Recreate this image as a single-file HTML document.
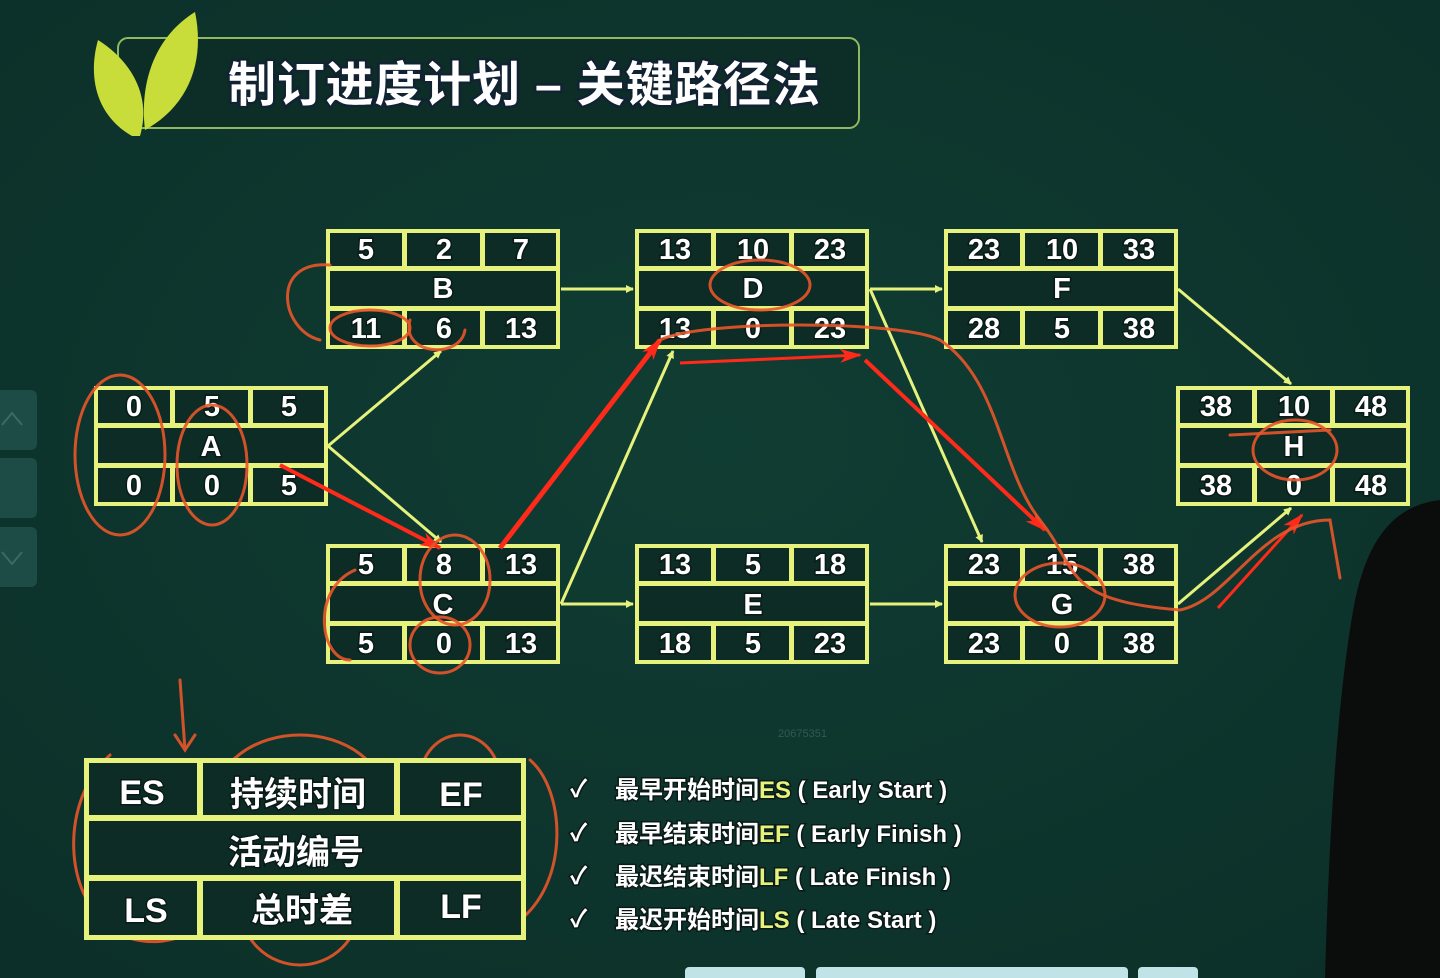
<!DOCTYPE html>
<html><head><meta charset="utf-8"><style>
html,body{margin:0;padding:0;background:#0f3a31;}
svg{display:block}
text{font-family:"Liberation Sans","Noto Sans CJK SC",sans-serif;font-weight:bold;fill:#fff;paint-order:stroke;stroke:#0a1a16;stroke-width:3px;}
.n{font-size:29px;text-anchor:middle;}
.y{stroke:#e6f27c;stroke-width:3;fill:none}
.r{stroke:#ff2a1a;fill:none}
.o{stroke:#e8552a;stroke-width:3;fill:none;stroke-linecap:round;opacity:.9}
</style></head><body>
<svg width="1440" height="978" viewBox="0 0 1440 978" xmlns="http://www.w3.org/2000/svg">
<defs>
<radialGradient id="bg" cx="50%" cy="45%" r="70%"><stop offset="0" stop-color="#103d33"/><stop offset="1" stop-color="#0c3029"/></radialGradient>
<g id="box">
<rect x="0" y="0" width="234" height="120" fill="#e6f27c"/>
<rect x="4" y="4" width="72" height="33" fill="#0c2c25"/>
<rect x="81" y="4" width="73" height="33" fill="#0c2c25"/>
<rect x="159" y="4" width="71" height="33" fill="#0c2c25"/>
<rect x="4" y="42" width="226" height="35" fill="#0c2c25"/>
<rect x="4" y="82" width="72" height="34" fill="#0c2c25"/>
<rect x="81" y="82" width="73" height="34" fill="#0c2c25"/>
<rect x="159" y="82" width="71" height="34" fill="#0c2c25"/>
</g>
<marker id="ya" markerWidth="8" markerHeight="8" refX="7" refY="4" orient="auto" markerUnits="userSpaceOnUse"><path d="M0,0 L8,4 L0,8z" fill="#e6f27c"/></marker>
<marker id="ra" markerWidth="22" markerHeight="14" refX="20" refY="7" orient="auto" markerUnits="userSpaceOnUse"><path d="M0,0 L22,7 L0,14 L6,7z" fill="#ff2a1a"/></marker>
</defs>
<rect width="1440" height="978" fill="url(#bg)"/>

<!-- side nav -->
<rect x="-10" y="390" width="47" height="60" rx="6" fill="#1d4b45"/>
<rect x="-10" y="458" width="47" height="60" rx="6" fill="#1d4b45"/>
<rect x="-10" y="527" width="47" height="60" rx="6" fill="#1d4b45"/>
<path d="M2,425 L12,413 L22,425" stroke="#3d6a64" stroke-width="2" fill="none"/>
<path d="M2,552 L12,564 L22,552" stroke="#3d6a64" stroke-width="2" fill="none"/>

<!-- title -->
<rect x="118" y="38" width="741" height="90" rx="10" fill="#0d2e26" stroke="#8fb860" stroke-width="2"/>
<path d="M132,136 C95,115 88,75 98,40 C130,60 152,95 140,136 Z" fill="#c8dd3a"/>
<path d="M145,130 C140,90 150,40 195,12 C205,60 190,105 145,130 Z" fill="#c8dd3a"/>
<text x="228" y="101" textLength="592" style="font-size:48px;stroke-width:5px;stroke:#123">制订进度计划 – 关键路径法</text>

<!-- yellow arrows -->
<g class="y" marker-end="url(#ya)">
<line x1="561" y1="289" x2="633" y2="289"/>
<line x1="870" y1="289" x2="942" y2="289"/>
<line x1="1178" y1="289" x2="1291" y2="384"/>
<line x1="328" y1="446" x2="441" y2="351"/>
<line x1="328" y1="446" x2="441" y2="542"/>
<line x1="561" y1="604" x2="633" y2="604"/>
<line x1="561" y1="604" x2="673" y2="351"/>
<line x1="870" y1="604" x2="942" y2="604"/>
<line x1="870" y1="289" x2="982" y2="542"/>
<line x1="1178" y1="604" x2="1291" y2="508"/>
</g>

<!-- boxes -->
<use href="#box" x="326" y="229"/>
<use href="#box" x="635" y="229"/>
<use href="#box" x="944" y="229"/>
<use href="#box" x="94" y="386"/>
<use href="#box" x="1176" y="386"/>
<use href="#box" x="326" y="544"/>
<use href="#box" x="635" y="544"/>
<use href="#box" x="944" y="544"/>

<g class="n">
<text x="366" y="259">5</text><text x="444" y="259">2</text><text x="521" y="259">7</text>
<text x="443" y="298">B</text>
<text x="366" y="338">11</text><text x="444" y="338">6</text><text x="521" y="338">13</text>

<text x="675" y="259">13</text><text x="753" y="259">10</text><text x="830" y="259">23</text>
<text x="753" y="298">D</text>
<text x="675" y="338">13</text><text x="753" y="338">0</text><text x="830" y="338">23</text>

<text x="984" y="259">23</text><text x="1062" y="259">10</text><text x="1139" y="259">33</text>
<text x="1062" y="298">F</text>
<text x="984" y="338">28</text><text x="1062" y="338">5</text><text x="1139" y="338">38</text>

<text x="134" y="416">0</text><text x="212" y="416">5</text><text x="289" y="416">5</text>
<text x="211" y="456">A</text>
<text x="134" y="495">0</text><text x="212" y="495">0</text><text x="289" y="495">5</text>

<text x="1216" y="416">38</text><text x="1294" y="416">10</text><text x="1371" y="416">48</text>
<text x="1294" y="456">H</text>
<text x="1216" y="495">38</text><text x="1294" y="495">0</text><text x="1371" y="495">48</text>

<text x="366" y="574">5</text><text x="444" y="574">8</text><text x="521" y="574">13</text>
<text x="443" y="614">C</text>
<text x="366" y="653">5</text><text x="444" y="653">0</text><text x="521" y="653">13</text>

<text x="675" y="574">13</text><text x="753" y="574">5</text><text x="830" y="574">18</text>
<text x="753" y="614">E</text>
<text x="675" y="653">18</text><text x="753" y="653">5</text><text x="830" y="653">23</text>

<text x="984" y="574">23</text><text x="1062" y="574">15</text><text x="1139" y="574">38</text>
<text x="1062" y="614">G</text>
<text x="984" y="653">23</text><text x="1062" y="653">0</text><text x="1139" y="653">38</text>
</g>

<!-- red arrows -->
<g class="r" marker-end="url(#ra)">
<line x1="280" y1="465" x2="440" y2="548" stroke-width="4"/>
<line x1="500" y1="548" x2="660" y2="340" stroke-width="5"/>
<line x1="680" y1="363" x2="860" y2="355" stroke-width="3"/>
<line x1="865" y1="360" x2="1045" y2="530" stroke-width="4"/>
<line x1="1218" y1="608" x2="1302" y2="515" stroke-width="3"/>
</g>

<!-- orange freehand -->
<ellipse cx="120" cy="455" rx="45" ry="80" class="o"/>
<ellipse cx="212" cy="465" rx="35" ry="60" class="o"/>
<path d="M330,265 C270,260 280,330 320,340 M410,320 C400,355 460,360 465,330" class="o"/>
<ellipse cx="370" cy="328" rx="40" ry="18" class="o"/>
<ellipse cx="455" cy="580" rx="35" ry="45" class="o"/>
<ellipse cx="440" cy="645" rx="30" ry="28" class="o"/>
<path d="M355,570 C310,590 320,660 350,660" class="o"/>
<ellipse cx="760" cy="285" rx="50" ry="25" class="o"/>
<path d="M660,340 C700,320 900,320 940,340 C1000,380 1000,470 1040,520 C1080,570 1060,600 1180,610 C1230,600 1260,520 1330,520 L1340,578" class="o"/>
<ellipse cx="1060" cy="595" rx="45" ry="32" class="o"/>
<ellipse cx="1295" cy="450" rx="42" ry="30" class="o"/>
<path d="M1230,435 L1330,430" class="o"/>
<path d="M180,680 L185,750 M175,735 L185,750 L195,735" class="o"/>
<path d="M110,755 C60,800 60,900 120,935 C160,950 180,935 190,935" class="o"/>
<ellipse cx="300" cy="800" rx="85" ry="65" class="o"/>
<ellipse cx="300" cy="905" rx="60" ry="60" class="o"/>
<ellipse cx="460" cy="780" rx="40" ry="45" class="o"/>
<path d="M530,760 C565,790 570,880 520,920 M420,930 L470,935" class="o"/>

<!-- legend box -->
<rect x="84" y="758" width="442" height="182" fill="#e6f27c"/>
<rect x="89" y="763" width="108" height="52" fill="#0c2c25"/>
<rect x="203" y="763" width="191" height="52" fill="#0c2c25"/>
<rect x="400" y="763" width="121" height="52" fill="#0c2c25"/>
<rect x="89" y="821" width="432" height="54" fill="#0c2c25"/>
<rect x="89" y="881" width="108" height="54" fill="#0c2c25"/>
<rect x="203" y="881" width="191" height="54" fill="#0c2c25"/>
<rect x="400" y="881" width="121" height="54" fill="#0c2c25"/>
<g class="n" style="font-size:34px">
<text x="142" y="804">ES</text><text x="298" y="806">持续时间</text><text x="461" y="806">EF</text>
<text x="296" y="864">活动编号</text>
<text x="146" y="922">LS</text><text x="302" y="922">总时差</text><text x="461" y="918">LF</text>
</g>

<g style="font-size:24px">
<text x="570" y="797">✓</text><text x="615" y="798">最早开始时间<tspan fill="#e6f27c">ES</tspan> ( Early Start )</text>
<text x="570" y="841">✓</text><text x="615" y="842">最早结束时间<tspan fill="#e6f27c">EF</tspan> ( Early Finish )</text>
<text x="570" y="884">✓</text><text x="615" y="885">最迟结束时间<tspan fill="#e6f27c">LF</tspan> ( Late Finish )</text>
<text x="570" y="927">✓</text><text x="615" y="928">最迟开始时间<tspan fill="#e6f27c">LS</tspan> ( Late Start )</text>
</g>
<text x="778" y="737" style="font-size:11px;fill:#2f5b52;stroke:none;font-weight:normal">20675351</text>

<!-- person silhouette -->
<path d="M1440,500 C1400,505 1370,530 1355,600 C1340,680 1330,800 1325,978 L1440,978 Z" fill="#0b0d0d"/>
<!-- bottom bar -->
<rect x="685" y="967" width="120" height="20" rx="4" fill="#bfe3e6"/>
<rect x="816" y="967" width="312" height="20" rx="4" fill="#bfe3e6"/>
<rect x="1138" y="967" width="60" height="20" rx="4" fill="#bfe3e6"/>
</svg>
</body></html>
